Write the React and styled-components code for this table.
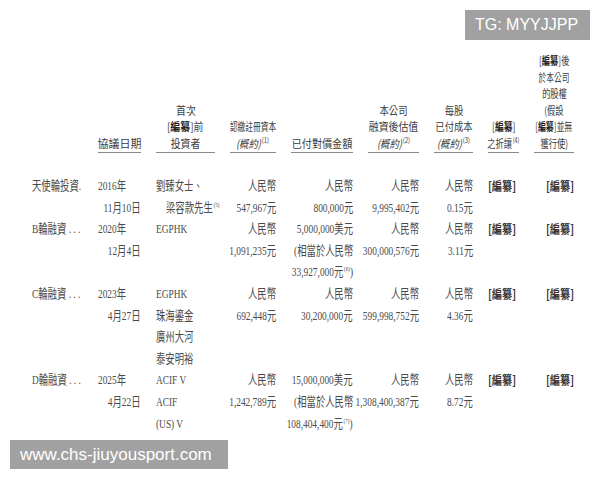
import React from 'react';
import styled, { createGlobalStyle } from 'styled-components';

const GlobalStyle = createGlobalStyle`
  html, body {
    margin: 0;
    padding: 0;
    background: #fff;
  }
  body {
    width: 600px;
    height: 480px;
    overflow: hidden;
  }
`;

const Page = styled.div`
  position: relative;
  width: 600px;
  height: 480px;
  background: #fff;
  box-sizing: border-box;
  padding: 52px 0 0 32px;
`;

const COLS = '51px 43px 59px 46px 62px 51px 39px 31px 40px';

const HeadRow = styled.div`
  display: grid;
  grid-template-columns: ${COLS};
  column-gap: 15px;
  align-items: end;
`;

const HeadCell = styled.div`
  display: flex;
  flex-direction: column;
  align-items: center;
  font-family: "Noto Sans CJK TC", "Noto Sans", sans-serif;
  font-size: 11px;
  line-height: 16.5px;
  color: #3c3c3c;
  white-space: nowrap;
  padding-bottom: 1px;
  border-bottom: ${p => (p.$ruled ? '1.5px solid #8a8a8a' : 'none')};
`;

const HeadLine = styled.span`
  display: inline-block;
  flex-shrink: 0;
  transform: scaleX(${p => p.$scale || 1});
  transform-origin: center;
`;

const Ital = styled.span`
  font-style: italic;
`;

const Bold = styled.b`
  font-weight: 700;
  color: #222;
`;

const Note = styled.sup`
  font-size: 7px;
  vertical-align: 5px;
  line-height: 0;
  margin-left: 1px;
`;

const Body = styled.div`
  display: flex;
  flex-direction: column;
  margin-top: 22px;
`;

const Row = styled.div`
  display: grid;
  grid-template-columns: ${COLS};
  column-gap: 15px;
  align-items: start;
`;

const Cell = styled.div`
  font-family: "Liberation Serif", "Noto Sans CJK TC", serif;
  font-size: 13px;
  line-height: 21.6px;
  color: #4a4a4a;
  white-space: nowrap;
  min-width: 0;
`;

const Line = styled.div`
  display: flex;
  justify-content: ${p => (p.$align === 'right' ? 'flex-end' : 'flex-start')};
  padding-left: ${p => p.$indent || 0}px;
`;

const Txt = styled.span`
  display: inline-block;
  flex-shrink: 0;
  transform: scaleX(0.72);
  transform-origin: ${p => (p.$align === 'right' ? 'right' : 'left')} center;
`;

const Mark = styled.span`
  display: inline-block;
  flex-shrink: 0;
  font-family: "Noto Sans CJK TC", sans-serif;
  font-size: 12px;
  font-weight: 700;
  color: #333;
  transform: scaleX(0.85);
  transform-origin: left center;
`;

const Badge = styled.div`
  position: absolute;
  background: rgba(140, 140, 140, 0.82);
  color: #fff;
  font-family: "Liberation Sans", Arial, sans-serif;
  display: flex;
  align-items: center;
  box-sizing: border-box;
`;

const TopBadge = styled(Badge)`
  top: 10px;
  left: 465px;
  width: 125px;
  height: 30px;
  padding-left: 10px;
  font-size: 16px;
`;

const BottomBadge = styled(Badge)`
  top: 440px;
  left: 10px;
  width: 218px;
  height: 29px;
  padding-left: 10px;
  font-size: 17px;
`;

const T = ({ children, align }) => (
  <Line $align={align}>
    <Txt $align={align}>{children}</Txt>
  </Line>
);

const rows = [
  {
    label: '天使輪投資.',
    date: ['2016年', '11月10日'],
    investors: [
      { t: '劉臻女士、' },
      { t: '梁容款先生', note: '(5)', indent: 10 },
    ],
    capital: ['人民幣', '547,967元'],
    paid: [{ t: '人民幣' }, { t: '800,000元' }],
    valuation: ['人民幣', '9,995,402元'],
    cost: ['人民幣', '0.15元'],
  },
  {
    label: 'B輪融資 . . .',
    date: ['2020年', '12月4日'],
    investors: [{ t: 'EGPHK' }],
    capital: ['人民幣', '1,091,235元'],
    paid: [{ t: '5,000,000美元' }, { t: '(相當於人民幣' }, { t: '33,927,000元', note: '(6)', tail: ')' }],
    valuation: ['人民幣', '300,000,576元'],
    cost: ['人民幣', '3.11元'],
  },
  {
    label: 'C輪融資 . . .',
    date: ['2023年', '4月27日'],
    investors: [{ t: 'EGPHK' }, { t: '珠海鎏金' }, { t: '廣州大河' }, { t: '泰安明裕' }],
    capital: ['人民幣', '692,448元'],
    paid: [{ t: '人民幣' }, { t: '30,200,000元' }],
    valuation: ['人民幣', '599,998,752元'],
    cost: ['人民幣', '4.36元'],
  },
  {
    label: 'D輪融資 . . .',
    date: ['2025年', '4月22日'],
    investors: [{ t: 'ACIF V' }, { t: 'ACIF' }, { t: '(US) V' }],
    capital: ['人民幣', '1,242,789元'],
    paid: [{ t: '15,000,000美元' }, { t: '(相當於人民幣' }, { t: '108,404,400元', note: '(7)', tail: ')' }],
    valuation: ['人民幣', '1,308,400,387元'],
    cost: ['人民幣', '8.72元'],
  },
];

const Header = () => (
  <HeadRow>
    <HeadCell />
    <HeadCell $ruled>
      <HeadLine>協議日期</HeadLine>
    </HeadCell>
    <HeadCell $ruled>
      <HeadLine $scale={0.9}>首次</HeadLine>
      <HeadLine $scale={0.9}>[<Bold>編纂</Bold>]前</HeadLine>
      <HeadLine $scale={0.9}>投資者</HeadLine>
    </HeadCell>
    <HeadCell $ruled>
      <HeadLine $scale={0.7}>認繳註冊資本</HeadLine>
      <HeadLine $scale={0.85}><Ital>(概約)</Ital><Note>(1)</Note></HeadLine>
    </HeadCell>
    <HeadCell $ruled>
      <HeadLine $scale={0.92}>已付對價金額</HeadLine>
    </HeadCell>
    <HeadCell $ruled>
      <HeadLine $scale={0.85}>本公司</HeadLine>
      <HeadLine $scale={0.9}>融資後估值</HeadLine>
      <HeadLine $scale={0.85}><Ital>(概約)</Ital><Note>(2)</Note></HeadLine>
    </HeadCell>
    <HeadCell $ruled>
      <HeadLine $scale={0.85}>每股</HeadLine>
      <HeadLine $scale={0.85}>已付成本</HeadLine>
      <HeadLine $scale={0.85}><Ital>(概約)</Ital><Note>(3)</Note></HeadLine>
    </HeadCell>
    <HeadCell $ruled>
      <HeadLine $scale={0.8}>[<Bold>編纂</Bold>]</HeadLine>
      <HeadLine $scale={0.75}>之折讓<Note>(4)</Note></HeadLine>
    </HeadCell>
    <HeadCell $ruled>
      <HeadLine $scale={0.75}>[<Bold>編纂</Bold>]後</HeadLine>
      <HeadLine $scale={0.7}>於本公司</HeadLine>
      <HeadLine $scale={0.75}>的股權</HeadLine>
      <HeadLine $scale={0.75}>(假設</HeadLine>
      <HeadLine $scale={0.72}>[<Bold>編纂</Bold>]並無</HeadLine>
      <HeadLine $scale={0.75}>獲行使)</HeadLine>
    </HeadCell>
  </HeadRow>
);

export default function App() {
  return (
    <Page>
      <GlobalStyle />
      <Header />
      <Body>
        {rows.map(r => (
          <Row key={r.label}>
            <Cell>
              <T>{r.label}</T>
            </Cell>
            <Cell>
              <T>{r.date[0]}</T>
              <T align="right">{r.date[1]}</T>
            </Cell>
            <Cell>
              {r.investors.map(inv => (
                <Line key={inv.t} $indent={inv.indent}>
                  <Txt>
                    {inv.t}
                    {inv.note && <Note>{inv.note}</Note>}
                  </Txt>
                </Line>
              ))}
            </Cell>
            <Cell>
              {r.capital.map(c => (
                <T key={c} align="right">{c}</T>
              ))}
            </Cell>
            <Cell>
              {r.paid.map(p => (
                <Line key={p.t} $align="right">
                  <Txt $align="right">
                    {p.t}
                    {p.note && <Note>{p.note}</Note>}
                    {p.tail}
                  </Txt>
                </Line>
              ))}
            </Cell>
            <Cell>
              {r.valuation.map(v => (
                <T key={v} align="right">{v}</T>
              ))}
            </Cell>
            <Cell>
              {r.cost.map(v => (
                <T key={v} align="right">{v}</T>
              ))}
            </Cell>
            <Cell>
              <Line>
                <Mark>[編纂]</Mark>
              </Line>
            </Cell>
            <Cell>
              <Line $indent={12}>
                <Mark>[編纂]</Mark>
              </Line>
            </Cell>
          </Row>
        ))}
      </Body>
      <TopBadge>TG: MYYJJPP</TopBadge>
      <BottomBadge>www.chs-jiuyousport.com</BottomBadge>
    </Page>
  );
}
